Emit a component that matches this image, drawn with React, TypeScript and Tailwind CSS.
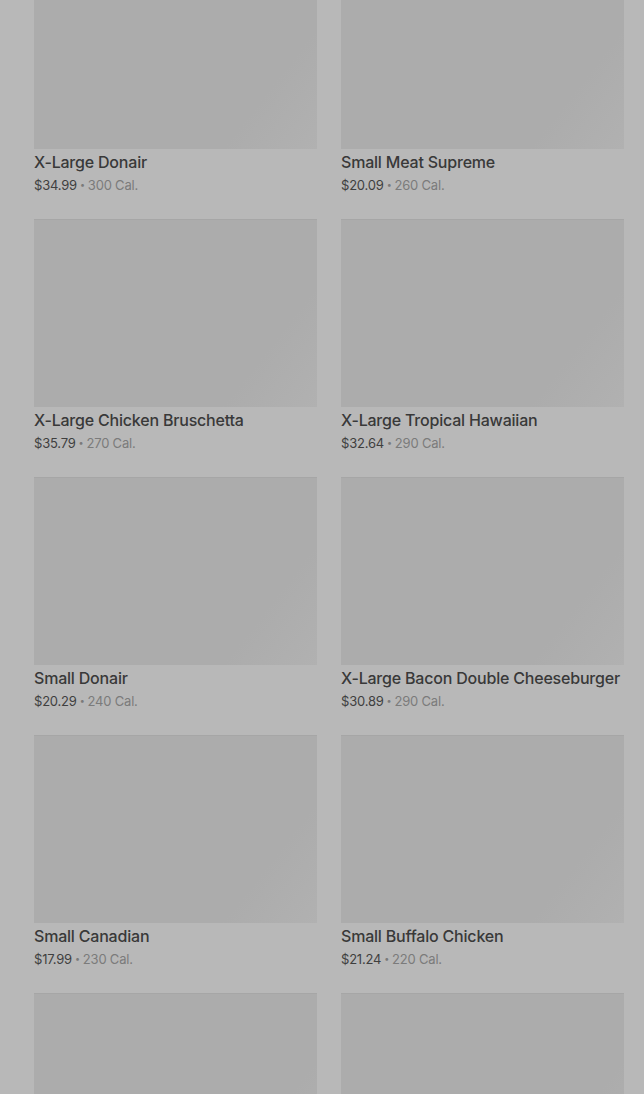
import React from "react";

type Item = { name: string; price: string; cal: string } | null;

const rows: [Item, Item][] = [
  [
    { name: "X-Large Donair", price: "$34.99", cal: "300 Cal." },
    { name: "Small Meat Supreme", price: "$20.09", cal: "260 Cal." },
  ],
  [
    { name: "X-Large Chicken Bruschetta", price: "$35.79", cal: "270 Cal." },
    { name: "X-Large Tropical Hawaiian", price: "$32.64", cal: "290 Cal." },
  ],
  [
    { name: "Small Donair", price: "$20.29", cal: "240 Cal." },
    { name: "X-Large Bacon Double Cheeseburger", price: "$30.89", cal: "290 Cal." },
  ],
  [
    { name: "Small Canadian", price: "$17.99", cal: "230 Cal." },
    { name: "Small Buffalo Chicken", price: "$21.24", cal: "220 Cal." },
  ],
  [null, null],
];

function Card({ item }: { item: Item }) {
  return (
    <div className="flex flex-col">
      <div className="h-[188px] w-full border-t border-[#a6a6a6] bg-[linear-gradient(128deg,#acacac_0%,#acacac_78%,#b1b1b1_100%)]" />
      {item && (
        <>
          <div className="mt-[1px] h-6 text-[16px] leading-6 font-medium tracking-[-0.2px] text-[#393939] whitespace-nowrap">
            {item.name}
          </div>
          <div className="mt-[1px] flex h-5 items-center text-[13px] leading-5 tracking-[-0.2px] whitespace-nowrap">
            <span className="text-[#3f3f3f]">{item.price}</span>
            <span className="mx-[3px] text-[9px] leading-5 text-[#7a7a7a]">•</span>
            <span className="text-[#7b7b7b]">{item.cal}</span>
          </div>
        </>
      )}
    </div>
  );
}

export default function App() {
  return (
    <div
      className="h-[1094px] w-full overflow-hidden bg-[#b8b8b8]"
      style={{ fontFamily: "Inter, 'Noto Sans', sans-serif" }}
    >
      <div className="-mt-[39px] grid grid-cols-2 gap-x-6 gap-y-6 pl-[34px] pr-[20px]">
        {rows.flatMap((r, i) =>
          r.map((item, j) => <Card key={`${i}-${j}`} item={item} />)
        )}
      </div>
    </div>
  );
}
